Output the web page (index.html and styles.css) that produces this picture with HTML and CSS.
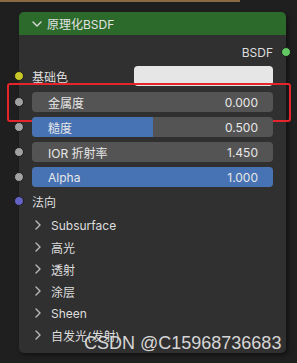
FILE: index.html
```html
<!DOCTYPE html>
<html>
<head>
    <title>原理化BSDF</title>
    <link rel="stylesheet" href="styles.css">
</head>
<body>
    <div class="topline"></div>

    <div class="node">
        <div class="node-header">
            <svg class="chev-down" width="10" height="6" viewBox="0 0 10 6"><polyline points="1,1 5,5 9,1" fill="none" stroke="#d8d8d8" stroke-width="1.4" stroke-linecap="round" stroke-linejoin="round"/></svg>
            <span>原理化BSDF</span>
        </div>

        <div class="node-body">
            <div class="output-row">
                <span>BSDF</span>
                <span class="socket socket-out green"></span>
            </div>

            <div class="row color-row">
                <span class="socket yellow"></span>
                <span class="label">基础色</span>
                <div class="color-field"></div>
            </div>

            <div class="row field grey-field">
                <span class="socket grey"></span>
                <span class="field-fill" style="width: 0%"></span>
                <span class="field-label">金属度</span>
                <span class="field-value">0.000</span>
                <div class="highlight"></div>
            </div>

            <div class="row field grey-field">
                <span class="socket grey"></span>
                <span class="field-fill" style="width: 50%"></span>
                <span class="field-label">糙度</span>
                <span class="field-value">0.500</span>
            </div>

            <div class="row field grey-field">
                <span class="socket grey"></span>
                <span class="field-label">IOR 折射率</span>
                <span class="field-value">1.450</span>
            </div>

            <div class="row field grey-field">
                <span class="socket grey"></span>
                <span class="field-fill" style="width: 100%"></span>
                <span class="field-label">Alpha</span>
                <span class="field-value">1.000</span>
            </div>

            <div class="row plain-row">
                <span class="socket purple"></span>
                <span class="label">法向</span>
            </div>

            <div class="panels">
                <div class="panel">
                    <svg class="chev-right" width="6" height="10" viewBox="0 0 6 10"><polyline points="1,1 5,5 1,9" fill="none" stroke="#b8b8b8" stroke-width="1.4" stroke-linecap="round" stroke-linejoin="round"/></svg>
                    <span>Subsurface</span>
                </div>
                <div class="panel">
                    <svg class="chev-right" width="6" height="10" viewBox="0 0 6 10"><polyline points="1,1 5,5 1,9" fill="none" stroke="#b8b8b8" stroke-width="1.4" stroke-linecap="round" stroke-linejoin="round"/></svg>
                    <span>高光</span>
                </div>
                <div class="panel">
                    <svg class="chev-right" width="6" height="10" viewBox="0 0 6 10"><polyline points="1,1 5,5 1,9" fill="none" stroke="#b8b8b8" stroke-width="1.4" stroke-linecap="round" stroke-linejoin="round"/></svg>
                    <span>透射</span>
                </div>
                <div class="panel">
                    <svg class="chev-right" width="6" height="10" viewBox="0 0 6 10"><polyline points="1,1 5,5 1,9" fill="none" stroke="#b8b8b8" stroke-width="1.4" stroke-linecap="round" stroke-linejoin="round"/></svg>
                    <span>涂层</span>
                </div>
                <div class="panel">
                    <svg class="chev-right" width="6" height="10" viewBox="0 0 6 10"><polyline points="1,1 5,5 1,9" fill="none" stroke="#b8b8b8" stroke-width="1.4" stroke-linecap="round" stroke-linejoin="round"/></svg>
                    <span>Sheen</span>
                </div>
                <div class="panel">
                    <svg class="chev-right" width="6" height="10" viewBox="0 0 6 10"><polyline points="1,1 5,5 1,9" fill="none" stroke="#b8b8b8" stroke-width="1.4" stroke-linecap="round" stroke-linejoin="round"/></svg>
                    <span>自发光(发射)</span>
                </div>
            </div>
        </div>
    </div>

    <div class="watermark">CSDN @C15968736683</div>
</body>
</html>
```

FILE: styles.css
```css
body {
    margin: 0;
    width: 297px;
    height: 363px;
    overflow: hidden;
    background-color: #1f1f1f;
    font-family: Inter, "Noto Sans CJK SC", sans-serif;
    font-size: 12px;
    color: #dedede;
    position: relative;
}

.topline {
    height: 2px;
    width: 240px;
    background-color: #8a6a42;
}

.node {
    margin: 10px 0 0 19px;
    width: 267px;
    height: 341px;
    background-color: #303030;
    border-radius: 5px;
    box-shadow: 2px 2px 4px rgba(0, 0, 0, 0.45);
}

.node-header {
    height: 23px;
    background-color: #2c6a2b;
    border-radius: 5px 5px 0 0;
    display: flex;
    align-items: center;
    padding-left: 13px;
    color: #e2e2e2;
}

.chev-down {
    margin-right: 5px;
}

.node-body {
    padding: 7px 13px 0 13px;
    display: flex;
    flex-direction: column;
}

.row {
    position: relative;
    height: 20px;
    display: flex;
    align-items: center;
}

.socket {
    position: absolute;
    left: -18px;
    top: 5px;
    width: 10px;
    height: 10px;
    border-radius: 50%;
    box-sizing: border-box;
    border: 1px solid #1b1b1b;
}

.socket.yellow { background-color: #c7c729; }
.socket.grey { background-color: #a1a1a1; }
.socket.purple { background-color: #6363c7; }
.socket.green { background-color: #63c763; }

.output-row {
    position: relative;
    height: 20px;
    display: flex;
    align-items: center;
    justify-content: flex-end;
    padding-right: 0;
}

.socket-out {
    left: auto;
    right: -18px;
}

.color-row {
    margin-top: 4px;
}

.label {
    width: 102px;
}

.color-field {
    flex: 1;
    height: 20px;
    background-color: #e6e6e6;
    border-radius: 4px;
}

.field {
    margin-top: 5px;
    border-radius: 4px;
    background-color: #545454;
    justify-content: space-between;
    padding: 0 15px 0 16px;
    color: #e8e8e8;
}

.color-row + .field {
    margin-top: 6px;
}

.field-fill {
    position: absolute;
    left: 0;
    top: 0;
    bottom: 0;
    background-color: #4772b3;
    border-radius: 4px;
}

.field-fill[style="width: 50%"] {
    border-radius: 4px 0 0 4px;
}

.field-label,
.field-value {
    position: relative;
}

.highlight {
    position: absolute;
    left: -25px;
    right: -18px;
    top: -9px;
    bottom: -10px;
    border: 2px solid #e5252b;
    border-radius: 3px;
}

.plain-row {
    margin-top: 4px;
}

.panels {
    margin-top: 3px;
    display: flex;
    flex-direction: column;
}

.panel {
    height: 22px;
    display: flex;
    align-items: center;
    padding-left: 3px;
}

.chev-right {
    margin-right: 10px;
}

.watermark {
    position: absolute;
    left: 84px;
    top: 333px;
    font-family: "Liberation Sans", Arial, sans-serif;
    font-size: 18px;
    color: #d6d6d6;
    white-space: nowrap;
}
```
